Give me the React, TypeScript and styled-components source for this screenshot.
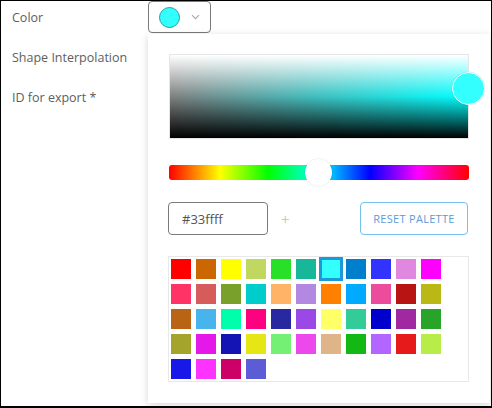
import styled, { createGlobalStyle } from "styled-components";

const GlobalStyle = createGlobalStyle`
  html, body {
    margin: 0;
    padding: 0;
    background: #fff;
  }
  * {
    box-sizing: border-box;
  }
`;

const PALETTE = [
  "#ff0000", "#cc6600", "#ffff00", "#c0d860", "#28e028", "#17b899", "#33ffff", "#0080cc", "#3333ff", "#e088e0", "#ff00ff",
  "#ff3366", "#d65c5c", "#7aa02c", "#00cccc", "#ffb366", "#b388e0", "#ff8000", "#00aaff", "#ec4c9c", "#b81414", "#bab814",
  "#b86414", "#48b4ec", "#00ffaa", "#ff0080", "#2828a0", "#9a48e6", "#ffff66", "#33cc99", "#0000cc", "#a028a0", "#28a428",
  "#a4a42c", "#e418e8", "#1414b4", "#e6e614", "#74f074", "#ec48ec", "#dfb488", "#14b814", "#b266ff", "#e61a1a", "#b8ec48",
  "#1818e8", "#ff33ff", "#cc0066", "#5c5cd6",
];

const SELECTED = "#33ffff";

const App = () => {
  return (
    <>
      <GlobalStyle />
      <Frame>
        <Form>
          <Row>
            <Label>Color</Label>
            <Field>
              <ColorButton type="button">
                <Dot color={SELECTED} />
                <svg width="9" height="6" viewBox="0 0 9 6">
                  <path d="M1 1.2l3.5 3.5 3.5-3.5" fill="none" stroke="#a8a8a8" strokeWidth="1.1" />
                </svg>
              </ColorButton>
              <Popover>
                <Saturation>
                  <SatThumb color={SELECTED} />
                </Saturation>
                <Hue>
                  <HueThumb />
                </Hue>
                <Controls>
                  <HexInput defaultValue="#33ffff" />
                  <Plus>+</Plus>
                  <ResetButton type="button">Reset palette</ResetButton>
                </Controls>
                <Swatches>
                  {PALETTE.map((c, i) => (
                    <Swatch key={i} color={c} $active={c === SELECTED} />
                  ))}
                </Swatches>
              </Popover>
            </Field>
          </Row>
          <Row>
            <Label>Shape Interpolation</Label>
            <Field />
          </Row>
          <Row>
            <Label>ID for export *</Label>
            <Field />
          </Row>
        </Form>
      </Frame>
    </>
  );
};

export default App;

const Frame = styled.div`
  position: relative;
  width: 492px;
  height: 408px;
  border: 1px solid #000;
  border-bottom-width: 2px;
  overflow: hidden;
  font-family: "Open Sans", "Liberation Sans", sans-serif;
`;

const Form = styled.div`
  display: flex;
  flex-direction: column;
  gap: 8px;
  padding-left: 11px;
`;

const Row = styled.div`
  display: grid;
  grid-template-columns: 136px 1fr;
  align-items: center;
  height: 32px;
`;

const Label = styled.div`
  font-size: 12.5px;
  color: #5e5e5e;
`;

const Field = styled.div`
  position: relative;
  height: 32px;
`;

const ColorButton = styled.button`
  display: flex;
  align-items: center;
  gap: 11px;
  width: 63px;
  height: 32px;
  padding: 0 0 0 10px;
  background: #fff;
  border: 1px solid #7a7a7a;
  border-radius: 4px;
`;

const Dot = styled.span<{ color: string }>`
  width: 21px;
  height: 21px;
  border-radius: 50%;
  background: ${(p) => p.color};
  border: 1px solid #2d9c9c;
`;

const Popover = styled.div`
  position: absolute;
  top: 33px;
  left: 0;
  width: 342px;
  height: 369px;
  padding: 20px 0 0 21px;
  background: #fff;
  box-shadow: 0 2px 8px rgba(0, 0, 0, 0.16);
  display: flex;
  flex-direction: column;
  z-index: 2;
`;

const Saturation = styled.div`
  position: relative;
  width: 300px;
  height: 85px;
  border: 1px solid #e6e6e6;
  background: linear-gradient(
      to bottom,
      #fff 0%,
      rgba(255, 255, 255, 0) 50%,
      rgba(0, 0, 0, 0) 50%,
      #000 100%
    ),
    linear-gradient(to right, #808080, #00ffff);
`;

const SatThumb = styled.div<{ color: string }>`
  position: absolute;
  right: -17px;
  top: 17px;
  width: 33px;
  height: 33px;
  border-radius: 50%;
  background: ${(p) => p.color};
  border: 1px solid #fff;
  box-shadow: 0 0 1px rgba(0, 0, 0, 0.2);
`;

const Hue = styled.div`
  position: relative;
  margin-top: 26px;
  width: 300px;
  height: 15px;
  border-radius: 3px;
  background: linear-gradient(
    to right,
    #ff0000 0%,
    #ffff00 17%,
    #00ff00 33%,
    #00ffff 50%,
    #0000ff 67%,
    #ff00ff 83%,
    #ff0000 100%
  );
`;

const HueThumb = styled.div`
  position: absolute;
  left: 136px;
  top: -6px;
  width: 27px;
  height: 27px;
  border-radius: 50%;
  background: #fff;
  box-shadow: 0 0 2px rgba(0, 0, 0, 0.15);
`;

const Controls = styled.div`
  display: flex;
  align-items: center;
  margin-top: 22px;
  margin-left: -1px;
  width: 300px;
`;

const HexInput = styled.input`
  width: 100px;
  height: 33px;
  padding: 0 0 0 13px;
  border: 1px solid #7a7a7a;
  border-radius: 4px;
  font-family: "Open Sans", "Liberation Sans", sans-serif;
  font-size: 13px;
  color: #555;
  outline: none;
`;

const Plus = styled.span`
  margin-left: 13px;
  font-size: 15px;
  color: #c8c8c8;
`;

const ResetButton = styled.button`
  margin-left: auto;
  width: 108px;
  height: 33px;
  background: #fff;
  border: 1px solid #74c2ea;
  border-radius: 4px;
  font-family: "Open Sans", "Liberation Sans", sans-serif;
  font-size: 11px;
  text-transform: uppercase;
  letter-spacing: 0.3px;
  color: #5b9bd5;
`;

const Swatches = styled.div`
  margin-top: 21px;
  margin-left: -1px;
  width: 301px;
  height: 126px;
  border: 1px solid #e8e8e8;
  padding: 2px;
  display: grid;
  grid-template-columns: repeat(11, 20px);
  grid-auto-rows: 20px;
  gap: 5px;
  align-content: start;
`;

const Swatch = styled.div<{ color: string; $active: boolean }>`
  background: ${(p) => p.color};
  box-shadow: ${(p) => (p.$active ? "0 0 0 2px #1a9ad8, inset 0 0 0 1px #1a9ad8" : "none")};
`;
